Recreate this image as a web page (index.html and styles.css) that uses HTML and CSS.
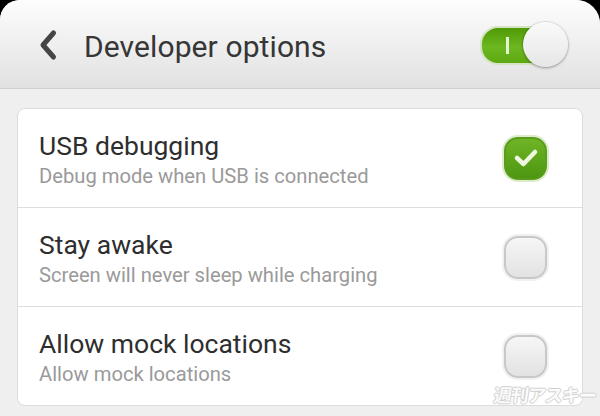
FILE: index.html
```html
<!DOCTYPE html>
<html>
<head>
<meta charset="utf-8">
<link rel="stylesheet" href="styles.css">
</head>
<body>
<div class="screen">
  <header class="topbar">
    <svg class="back" width="20" height="32" viewBox="0 0 20 32">
      <path d="M15.5 4 L5 16 L15.5 28" fill="none" stroke="#454545" stroke-width="5" stroke-linecap="round" stroke-linejoin="round"/>
    </svg>
    <h1 class="title">Developer options</h1>
    <div class="toggle">
      <div class="pill"><span class="bar"></span></div>
      <div class="knob"></div>
    </div>
  </header>
  <main class="content">
    <div class="card">
      <div class="row">
        <div class="texts">
          <div class="row-title">USB debugging</div>
          <div class="row-sub">Debug mode when USB is connected</div>
        </div>
        <div class="check on">
          <svg width="26" height="20" viewBox="0 0 26 20">
            <path d="M4 10 L10.5 16 L22 4" fill="none" stroke="#eef7df" stroke-width="4.5" stroke-linecap="round" stroke-linejoin="round"/>
          </svg>
        </div>
      </div>
      <div class="row">
        <div class="texts">
          <div class="row-title">Stay awake</div>
          <div class="row-sub">Screen will never sleep while charging</div>
        </div>
        <div class="check"></div>
      </div>
      <div class="row">
        <div class="texts">
          <div class="row-title">Allow mock locations</div>
          <div class="row-sub">Allow mock locations</div>
        </div>
        <div class="check"></div>
      </div>
    </div>
    <div class="watermark">週刊アスキー</div>
  </main>
</div>
</body>
</html>
```
FILE: styles.css
```css
html, body {
  margin: 0;
  padding: 0;
  background: #000;
}
.screen {
  width: 600px;
  height: 416px;
  background: #efefef;
  border-radius: 20px 24px 0 0;
  overflow: hidden;
  font-family: Roboto, "Noto Sans", sans-serif;
  position: relative;
}
.topbar {
  height: 88px;
  border-bottom: 1px solid #cfcfcf;
  background: linear-gradient(#fdfdfd, #e1e1e1);
  display: flex;
  align-items: center;
  padding: 0 32px 0 38px;
  box-sizing: content-box;
}
.back {
  display: block;
  margin-top: 1px;
}
.title {
  margin: 4px 0 0 26px;
  font-weight: 400;
  font-size: 30px;
  color: #363636;
  flex: 1;
  letter-spacing: 0.1px;
}
.toggle {
  position: relative;
  width: 88px;
  height: 46px;
}
.pill {
  position: absolute;
  left: 0;
  top: 5px;
  width: 66px;
  height: 35px;
  border-radius: 18px;
  background: linear-gradient(#4f9a06, #6db720 55%, #5ea812);
  border: 2px solid #d5e3c4;
}
.bar {
  position: absolute;
  left: 24px;
  top: 9px;
  width: 3px;
  height: 17px;
  background: #e6f3d2;
}
.knob {
  position: absolute;
  right: 0;
  top: 1px;
  width: 45px;
  height: 45px;
  border-radius: 50%;
  background: linear-gradient(#fafafa, #e6e6e6);
  box-shadow: 0 1px 3px rgba(0,0,0,0.35), 0 0 0 1px rgba(0,0,0,0.06);
}
.content {
  padding: 19px 17px 0;
}
.card {
  background: #fff;
  border: 1px solid #dcdcdc;
  border-radius: 8px;
}
.row {
  height: 98px;
  display: flex;
  align-items: center;
  padding: 0 35px 0 21px;
  border-top: 1px solid #dedede;
}
.row:first-child {
  border-top: none;
}
.texts {
  flex: 1;
  padding-top: 5px;
}
.row-title {
  font-size: 26.5px;
  line-height: 30px;
  color: #2e2e2e;
}
.row-sub {
  font-size: 20.2px;
  line-height: 30px;
  color: #9a9a9a;
}
.check {
  width: 39px;
  height: 39px;
  border-radius: 14px;
  border: 2px solid #c8c8c8;
  background: linear-gradient(#f6f6f6, #e2e2e2);
  box-shadow: 0 0 0 2px #f1f1f1;
  display: flex;
  align-items: center;
  justify-content: center;
}
.check.on {
  border-color: #5a9c1c;
  background: linear-gradient(#6fb526, #4d9610);
  box-shadow: 0 0 0 2px #dcebc9;
}
.watermark {
  position: absolute;
  right: 4px;
  bottom: 9px;
  font-family: "Noto Sans CJK JP", sans-serif;
  font-weight: 700;
  font-size: 18px;
  letter-spacing: -1px;
  color: #fbfbfb;
  text-shadow: 1px 0 0 #d0d0d0, -1px 0 0 #d0d0d0, 0 1px 0 #d0d0d0, 0 -1px 0 #d0d0d0;
  transform: skewX(-8deg);
}
```
